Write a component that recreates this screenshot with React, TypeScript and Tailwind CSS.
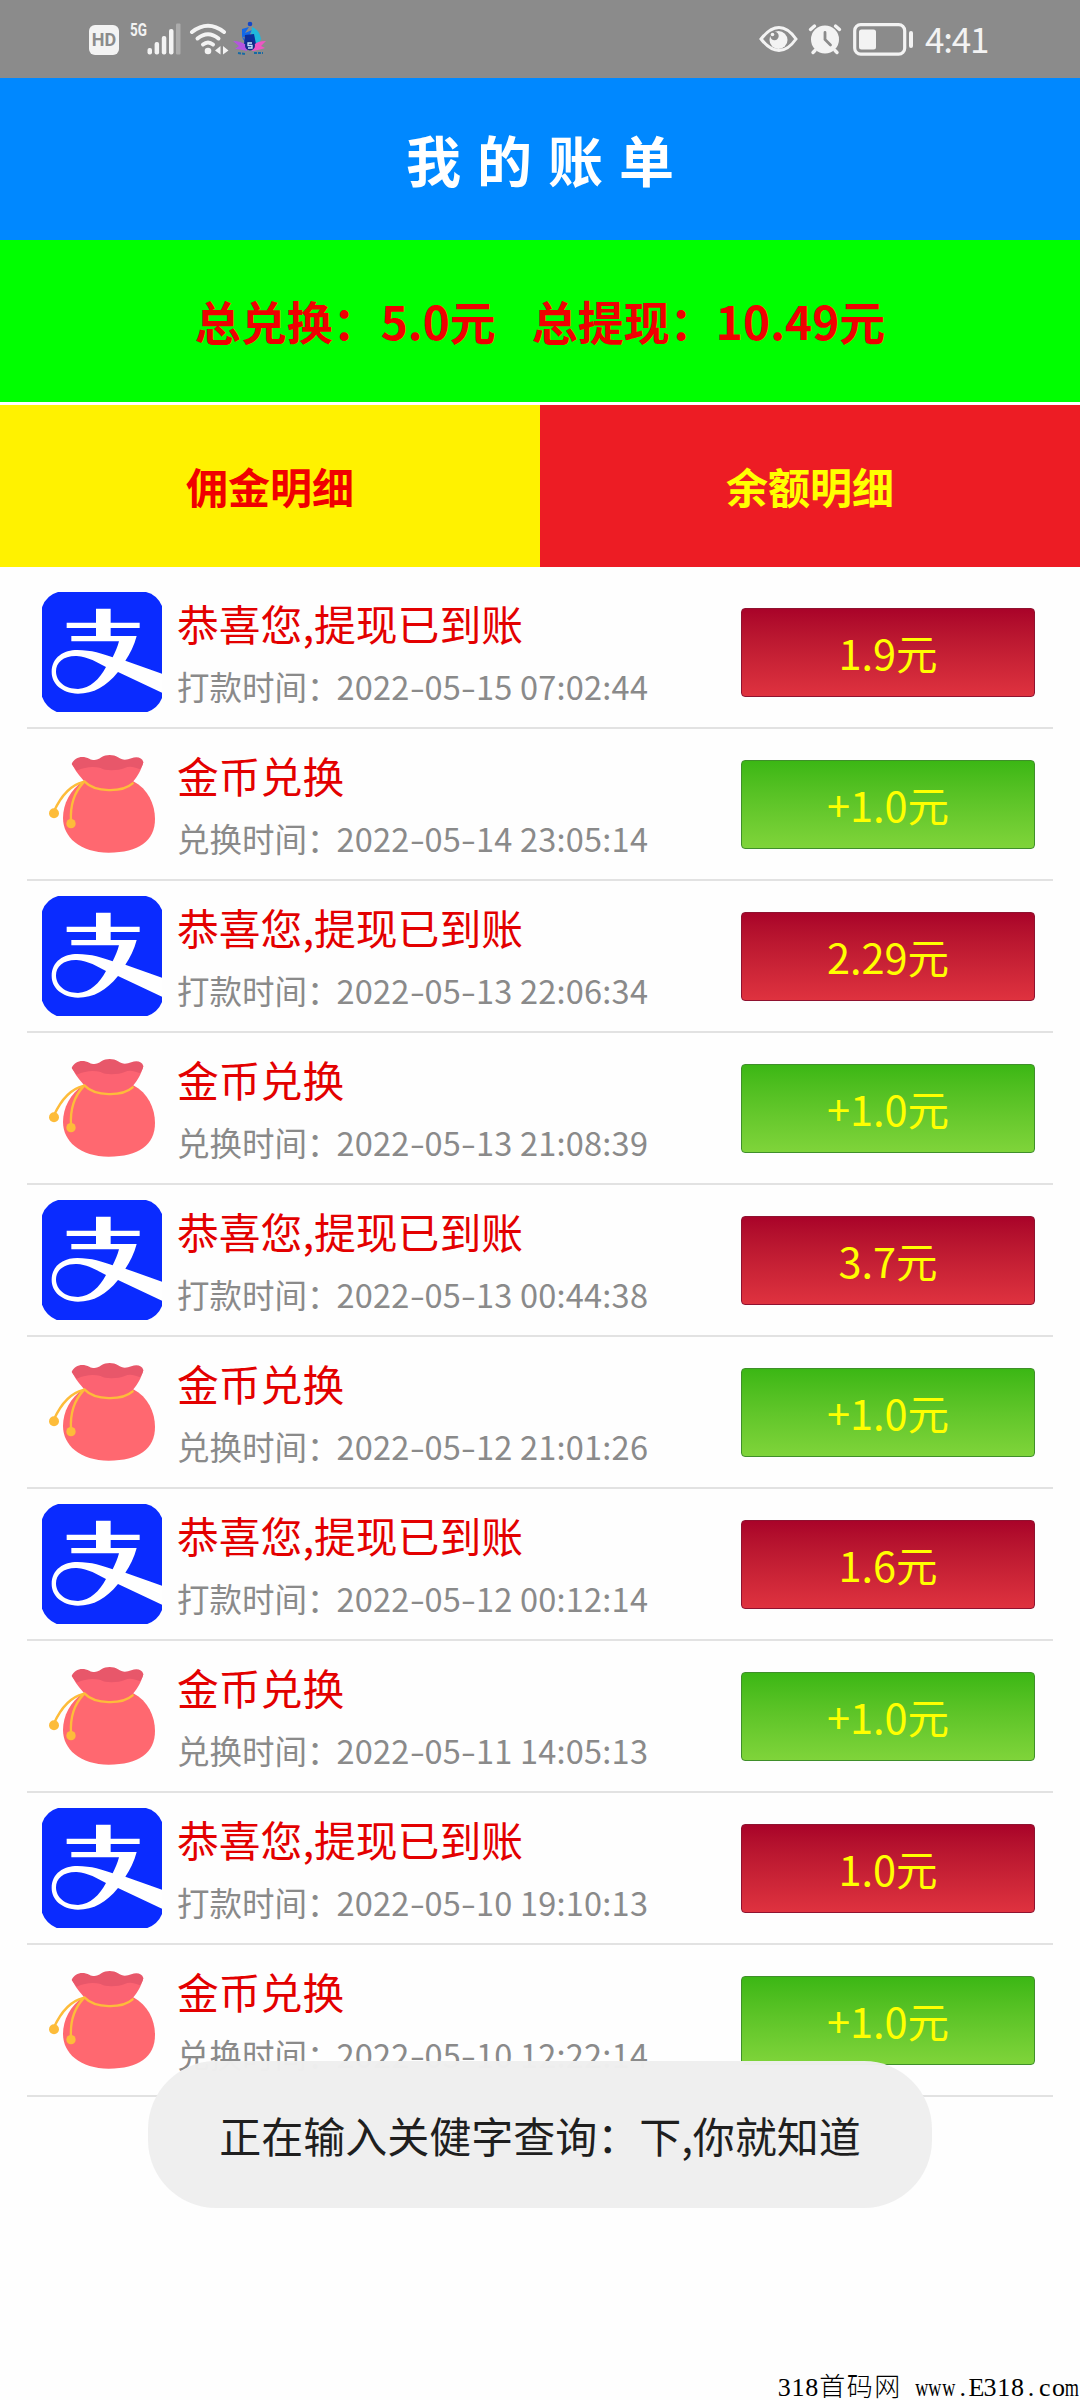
import React from "react";

type Entry = { kind: "out" | "in"; time: string; amount: string };

const entries: Entry[] = [
  { kind: "out", time: "2022-05-15 07:02:44", amount: "1.9元" },
  { kind: "in", time: "2022-05-14 23:05:14", amount: "+1.0元" },
  { kind: "out", time: "2022-05-13 22:06:34", amount: "2.29元" },
  { kind: "in", time: "2022-05-13 21:08:39", amount: "+1.0元" },
  { kind: "out", time: "2022-05-13 00:44:38", amount: "3.7元" },
  { kind: "in", time: "2022-05-12 21:01:26", amount: "+1.0元" },
  { kind: "out", time: "2022-05-12 00:12:14", amount: "1.6元" },
  { kind: "in", time: "2022-05-11 14:05:13", amount: "+1.0元" },
  { kind: "out", time: "2022-05-10 19:10:13", amount: "1.0元" },
  { kind: "in", time: "2022-05-10 12:22:14", amount: "+1.0元" },
];

function AlipayIcon() {
  return (
    <svg className="block h-[120px] w-[120px]" viewBox="0 0 360 360">
      <path fill="#0a2bff" d="M48 0H312Q345 8 360 42V318Q348 348 316 360H44Q12 346 0 314V46Q12 10 48 0Z" />
      <path fill="#fff" d="M162 50H206V92H293V108H206V132H284C277 160 264 186 250 206L360 245V302L228 240C192 284 155 305 108 305C58 303 29 275 29 240C29 195 66 174 106 174C148 174 182 185 212 196C220 180 227 164 231 148H88V132H162V108H74V92H162Z" />
      <path fill="#0a2bff" d="M192 225C165 212 140 194 104 192C64 191 42 212 42 238C42 270 70 291 108 291C145 289 172 262 192 225Z" />
    </svg>
  );
}

function BagIcon() {
  return (
    <svg className="block h-[120px] w-[120px]" viewBox="0 0 360 360">
      <path fill="#ff6870" d="M124 110L274 112C318 135 339 182 339 225C339 290 290 326 200 326C115 326 63 280 63 222C63 178 85 138 124 110Z" />
      <path fill="#fc6372" d="M90 60L304 54C298 78 286 98 274 112C250 140 150 142 127 112C115 98 98 78 90 60Z" />
      <path fill="#e8576a" d="M89 60C98 38 122 34 142 44C156 52 166 48 178 40C192 31 214 31 228 40C242 50 254 48 268 43C284 37 300 40 304 54C303 62 299 69 294 76C275 68 262 66 248 72C230 80 190 82 176 72C155 66 130 68 104 80Z" />
      <g fill="none" stroke="#fdbc3a" strokeWidth="7" strokeLinecap="round">
        <path d="M127 112C160 146 240 146 272 118" />
        <path d="M124 114C82 124 56 158 36 202" />
        <path d="M124 116C98 144 84 184 87 232" />
      </g>
      <circle cx="36" cy="208" r="15" fill="#fdbc3a" />
      <circle cx="87" cy="239" r="14" fill="#fdbc3a" />
    </svg>
  );
}

function StatusBar() {
  return (
    <div className="flex h-[78px] items-start justify-between bg-[#8b8b8b] text-[#f3f3f3]">
      <div className="flex items-start pl-[89px]">
        <div className="mt-[25px] flex h-[30px] w-[30px] items-center justify-center rounded-[6px] bg-[#f3f3f3] font-['Roboto',sans-serif] text-[18px] leading-none font-bold text-[#8b8b8b]">
          HD
        </div>
        <div className="mt-[20px] ml-[11px] w-[17px] origin-left scale-x-75 font-['Roboto',sans-serif] text-[18px] leading-[20px] font-bold">5G</div>
        <svg className="mt-[23px] block h-[33px] w-[34px]" viewBox="146 23 34 33" fill="currentColor">
          <rect x="146.5" y="48" width="4.5" height="6.5" rx="2" />
          <rect x="153.6" y="42" width="4.5" height="12.5" rx="2" />
          <rect x="160.8" y="36" width="4.5" height="18.5" rx="2" />
          <rect x="168" y="29" width="4.5" height="25.5" rx="2" />
          <rect x="175" y="23.5" width="4.5" height="31" rx="1" opacity=".32" />
        </svg>
        <svg className="mt-[22px] ml-[8px] block h-[34px] w-[40px]" viewBox="188 22 40 34" fill="none" stroke="currentColor" strokeWidth="4" strokeLinecap="round">
          <path d="M191 32Q207 19.500 223 32" />
          <path d="M196.500 38.500Q207 30 217.500 38.500" />
          <path d="M202 44.500Q207 40.500 212 44.500" />
          <circle cx="207" cy="51" r="3.300" fill="currentColor" stroke="none" />
          <path d="M219.500 46V54.500L214 50.500ZM222 46V54.500L227.500 50.500Z" fill="currentColor" stroke="none" />
        </svg>
        <svg className="mt-[21px] ml-[4px] block h-[36px] w-[34px]" viewBox="0 0 34 36">
          <circle cx="17" cy="3" r="2.300" fill="#1447c8" />
          <path d="M9 8L16 6L12 12L19 9L16 15L10 16L13 21Q9 19 9 14Z" fill="#1268e8" />
          <path d="M19 6Q27 9 28 18Q26 24 20 24L18 14Z" fill="#21b8dc" />
          <path d="M12 14L21 13L23 23H11Z" fill="#0b2f9c" />
          <path d="M0 20Q8 20 13 24L14 30Q7 28 2 28L6 25Z" fill="#b455e0" />
          <path d="M33 20Q24 20 21 24L19 30Q27 29 32 27L28 25Z" fill="#ee56c4" />
          <circle cx="17" cy="24.500" r="5" fill="#102a88" />
          <path d="M19 22H15V24.500H19V27H15" fill="none" stroke="#c8e8ff" strokeWidth="1.300" />
          <path d="M5 32L12 33M21 32H30" stroke="#176aa5" strokeWidth="2" strokeDasharray="3 1" />
        </svg>
      </div>
      <div className="flex items-start pr-[92px]">
        <svg className="mt-[23px] block h-[32px] w-[40px]" viewBox="0 0 40 32" fill="none">
          <path d="M2 16Q11 4.500 20 4.500T37 16Q29 27.500 20 27.500T2 16Z" stroke="currentColor" strokeWidth="3" />
          <circle cx="19.500" cy="17" r="9" fill="currentColor" />
          <circle cx="15.500" cy="13" r="4.200" fill="#8b8b8b" />
          <circle cx="13.500" cy="11.500" r="1.800" fill="currentColor" />
        </svg>
        <svg className="mt-[23px] ml-[9px] block h-[32px] w-[34px]" viewBox="0 0 34 32" fill="none" stroke="currentColor" strokeWidth="3.400" strokeLinecap="round">
          <circle cx="17" cy="16.500" r="14" fill="currentColor" stroke="none" />
          <path d="M2.500 6.500L6.500 3M27.500 3L31.500 6.500M7 27.500L5 29.500M27 27.500L29 29.500" />
          <path d="M17 9.500V16.500L22.500 22" stroke="#8b8b8b" strokeWidth="2.800" />
        </svg>
        <svg className="mt-[23px] ml-[11px] block h-[33px] w-[61px]" viewBox="0 0 61 33" fill="none">
          <rect x="1.700" y="1.700" width="50" height="29.500" rx="6" stroke="currentColor" strokeWidth="3.200" />
          <rect x="6" y="6.500" width="17" height="20" rx="2.500" fill="currentColor" />
          <rect x="56" y="8" width="4" height="17" rx="2" fill="currentColor" />
        </svg>
        <div className="mt-[13px] ml-[11px] w-[63px] font-['Noto_Sans_CJK_SC',sans-serif] text-[35px] leading-[50px] tracking-[-1.2px] whitespace-nowrap">4:41</div>
      </div>
    </div>
  );
}

// Date digits with widened hyphens.
function Timestamp({ value }: { value: string }) {
  return (
    <>
      {value.split("-").map((part, i) => (
        <React.Fragment key={i}>
          {i > 0 && <span className="inline-block w-[15px] scale-x-[1.35] text-center">-</span>}
          {part}
        </React.Fragment>
      ))}
    </>
  );
}

function Row({ entry }: { entry: Entry }) {
  const out = entry.kind === "out";
  return (
    <li className="mx-[27px] flex h-[152px] items-start border-b-2 border-[#e2e2e2] pt-[15px] pl-[15px]">
      {out ? <AlipayIcon /> : <BagIcon />}
      <div className="ml-[15px] w-[564px] whitespace-nowrap">
        <div className="mt-[1px] text-[41.8px] leading-[60px] text-[#e30000]">{out ? "恭喜您,提现已到账" : "金币兑换"}</div>
        <div className="mt-[5px] text-[32.500px] leading-[56px] text-[#8a8a8a]">
          <span className="mr-[-3px]">{out ? "打款时间：" : "兑换时间："}</span>
          <span className="tracking-[0.22px]">
            <Timestamp value={entry.time} />
          </span>
        </div>
      </div>
      <div
        className={
          out
            ? "mt-[16px] flex h-[89px] w-[294px] items-center justify-center rounded-[4px] border border-[#8f1230] bg-linear-to-b from-[#a90329] to-[#df323f] text-[41.5px] text-[#ffff00]"
            : "mt-[16px] flex h-[89px] w-[294px] items-center justify-center rounded-[4px] border border-[#3f8f2a] bg-linear-to-b from-[#3bb714] to-[#7fd43a] text-[41.5px] text-[#ffff00]"
        }
      >
        <span>{entry.amount}</span>
      </div>
    </li>
  );
}

function Watermark() {
  return (
    <div className="absolute right-[1px] bottom-0 flex h-[24px] items-end font-['Liberation_Serif','Noto_Sans_CJK_SC',serif] text-[26px] leading-[24px] whitespace-pre text-black">
      {"318首码网 www.E318.com".split("").map((ch, i) => (
        <span
          key={i}
          className={
            /[\u4e00-\u9fff]/.test(ch)
              ? "flex h-[24px] w-[27.5px] justify-center font-light"
              : /[wm]/.test(ch)
                ? "flex h-[24px] w-[13.7px] scale-x-[0.7] justify-center"
                : "flex h-[24px] w-[13.7px] justify-center"
          }
        >
          {ch}
        </span>
      ))}
    </div>
  );
}

export default function App() {
  return (
    <div className="relative h-[2400px] w-[1080px] overflow-hidden bg-[#fefefe] font-['Noto_Sans_CJK_SC',sans-serif]">
      <StatusBar />
      <header className="flex h-[162px] items-center justify-center bg-[#0088ff] pb-[2px] text-[55px] font-bold text-white">
        <h1 className="[word-spacing:3.5px]">我 的 账 单</h1>
      </header>
      <section className="flex h-[162px] items-center justify-center bg-[#00ff00] pb-[2px] text-[46px] font-bold whitespace-nowrap text-[#f00000]">
        <span>总兑换：<span className="ml-[2px]">5.0元</span></span>
        <span className="ml-[36px]">总提现：10.49元</span>
      </section>
      <nav className="mt-[3px] grid h-[162px] grid-cols-2 text-[42px] font-bold">
        <div className="flex items-center justify-center bg-[#fff200] pb-[2px] text-[#f00000]">佣金明细</div>
        <div className="flex items-center justify-center bg-[#ed1c24] pb-[2px] text-[#ffff00]">余额明细</div>
      </nav>
      <ul className="mt-[10px]">
        {entries.map((e) => (
          <Row key={e.time} entry={e} />
        ))}
      </ul>
      <div className="absolute top-[2061px] left-[148px] flex h-[147px] w-[784px] items-center justify-center rounded-[68px] bg-[#efefef]/98 text-[42px] whitespace-nowrap text-[#1f1f1f]">
        正在输入关健字查询：下,你就知道
      </div>
      <Watermark />
    </div>
  );
}
